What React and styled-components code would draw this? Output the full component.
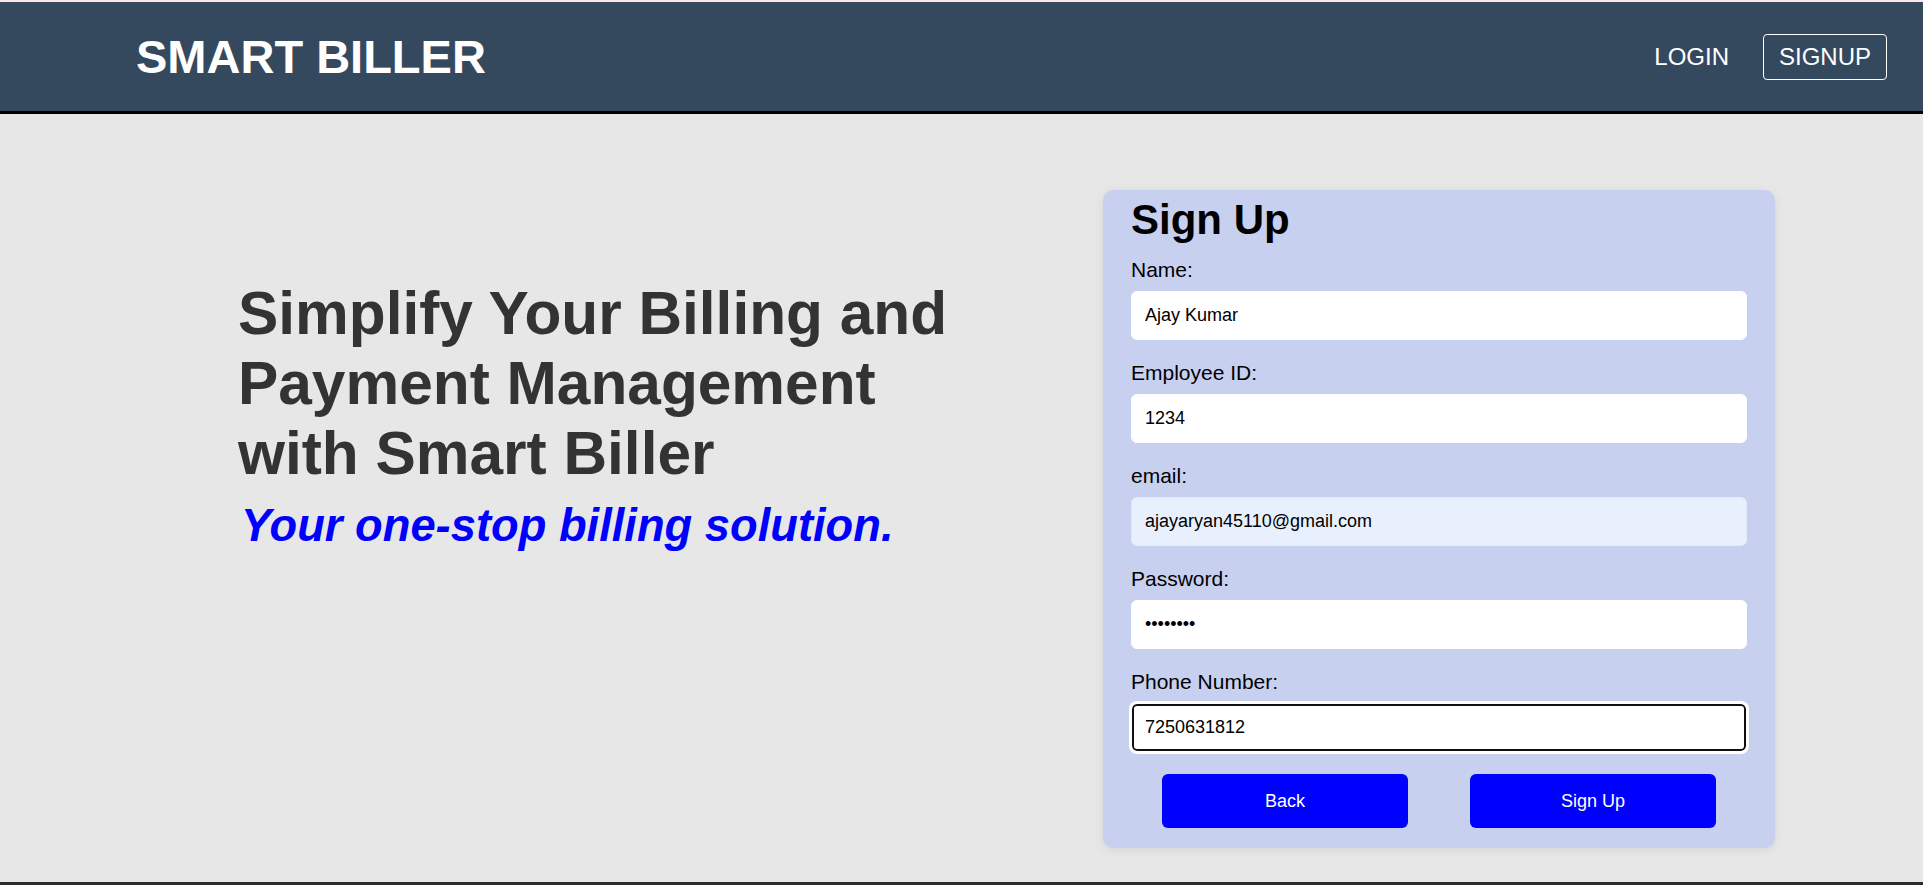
import React from "react";
import styled, { createGlobalStyle } from "styled-components";

const GlobalStyle = createGlobalStyle`
  html, body {
    margin: 0;
    padding: 0;
    background-color: #e7e7e7;
    font-family: "Liberation Sans", Arial, sans-serif;
  }
  * {
    box-sizing: border-box;
  }
`;

const Page = styled.div`
  display: flex;
  flex-direction: column;
  min-height: 885px;
`;

const Header = styled.header`
  display: flex;
  align-items: center;
  justify-content: space-between;
  height: 114px;
  padding: 0 36px 0 136px;
  background-color: #34495e;
  border-top: 2px solid #fbe7ea;
  border-bottom: 3px solid #000;
`;

const Brand = styled.h1`
  margin: 0;
  color: #fff;
  font-size: 47px;
  font-weight: 700;
`;

const Nav = styled.nav`
  display: flex;
  align-items: center;
  gap: 34px;
`;

const NavLink = styled.a`
  color: #fff;
  font-size: 24px;
  text-decoration: none;
  padding: ${(p) => (p.$boxed ? "8px 15px" : "0")};
  border: ${(p) => (p.$boxed ? "1px solid #fff" : "none")};
  border-radius: 4px;
  line-height: 28px;
  cursor: pointer;
`;

const Main = styled.main`
  flex: 1;
  display: flex;
  align-items: flex-start;
  padding: 76px 148px 34px 0;
`;

const Hero = styled.section`
  flex: 1;
  padding: 88px 0 0 238px;
`;

const Headline = styled.h2`
  margin: 0;
  max-width: 740px;
  color: #333;
  font-size: 60.4px;
  font-weight: 700;
  line-height: 70px;
`;

const Tagline = styled.p`
  margin: 12px 0 0;
  padding-left: 3px;
  color: #0000ff;
  font-size: 45.3px;
  font-weight: 700;
  font-style: italic;
  line-height: 52px;
`;

const Card = styled.form`
  width: 672px;
  display: flex;
  flex-direction: column;
  padding: 6px 28px 20px;
  background-color: #c8d0f0;
  border-radius: 10px;
  box-shadow: 0 2px 10px rgba(0, 0, 0, 0.08);
`;

const CardTitle = styled.h2`
  margin: 0 0 14px;
  font-size: 42px;
  font-weight: 700;
  line-height: 48px;
  color: #000;
`;

const Fields = styled.div`
  display: flex;
  flex-direction: column;
  gap: 21px;
`;

const Field = styled.div`
  display: flex;
  flex-direction: column;
  gap: 10px;
`;

const Label = styled.label`
  font-size: 21px;
  line-height: 23px;
  color: #000;
`;

const Input = styled.input`
  width: 100%;
  height: 49px;
  padding: 0 13px;
  font-family: "Liberation Sans", Arial, sans-serif;
  font-size: 18px;
  color: #000;
  background-color: ${(p) => (p.$autofill ? "#e8f0fe" : "#fff")};
  border: 1px solid ${(p) => (p.$autofill ? "#e3e9f7" : "#fff")};
  border-radius: 6px;
  outline: none;
  box-shadow: ${(p) =>
    p.$focused ? "inset 0 0 0 2px #101010, 0 0 0 2px #fff" : "none"};
`;

const Actions = styled.div`
  display: flex;
  justify-content: space-around;
  margin-top: 22px;
`;

const Button = styled.button`
  width: 246px;
  height: 54px;
  border: none;
  border-radius: 6px;
  background-color: #0000ff;
  color: #fff;
  font-family: "Liberation Sans", Arial, sans-serif;
  font-size: 18px;
  cursor: pointer;
`;

const FooterEdge = styled.footer`
  height: 5px;
  background-color: #2e2b2b;
`;

const fields = [
  { label: "Name:", type: "text", value: "Ajay Kumar" },
  { label: "Employee ID:", type: "text", value: "1234" },
  { label: "email:", type: "email", value: "ajayaryan45110@gmail.com", autofill: true },
  { label: "Password:", type: "password", value: "ajay1234" },
  { label: "Phone Number:", type: "tel", value: "7250631812", focused: true },
];

const App = () => {
  return (
    <Page>
      <GlobalStyle />
      <Header>
        <Brand>SMART BILLER</Brand>
        <Nav>
          <NavLink>LOGIN</NavLink>
          <NavLink $boxed>SIGNUP</NavLink>
        </Nav>
      </Header>
      <Main>
        <Hero>
          <Headline>
            Simplify Your Billing and Payment Management with Smart Biller
          </Headline>
          <Tagline>Your one-stop billing solution.</Tagline>
        </Hero>
        <Card onSubmit={(e) => e.preventDefault()}>
          <CardTitle>Sign Up</CardTitle>
          <Fields>
            {fields.map((f) => (
              <Field key={f.label}>
                <Label>{f.label}</Label>
                <Input
                  type={f.type}
                  defaultValue={f.value}
                  $autofill={f.autofill}
                  $focused={f.focused}
                />
              </Field>
            ))}
          </Fields>
          <Actions>
            <Button type="button">Back</Button>
            <Button type="submit">Sign Up</Button>
          </Actions>
        </Card>
      </Main>
      <FooterEdge />
    </Page>
  );
};

export default App;
